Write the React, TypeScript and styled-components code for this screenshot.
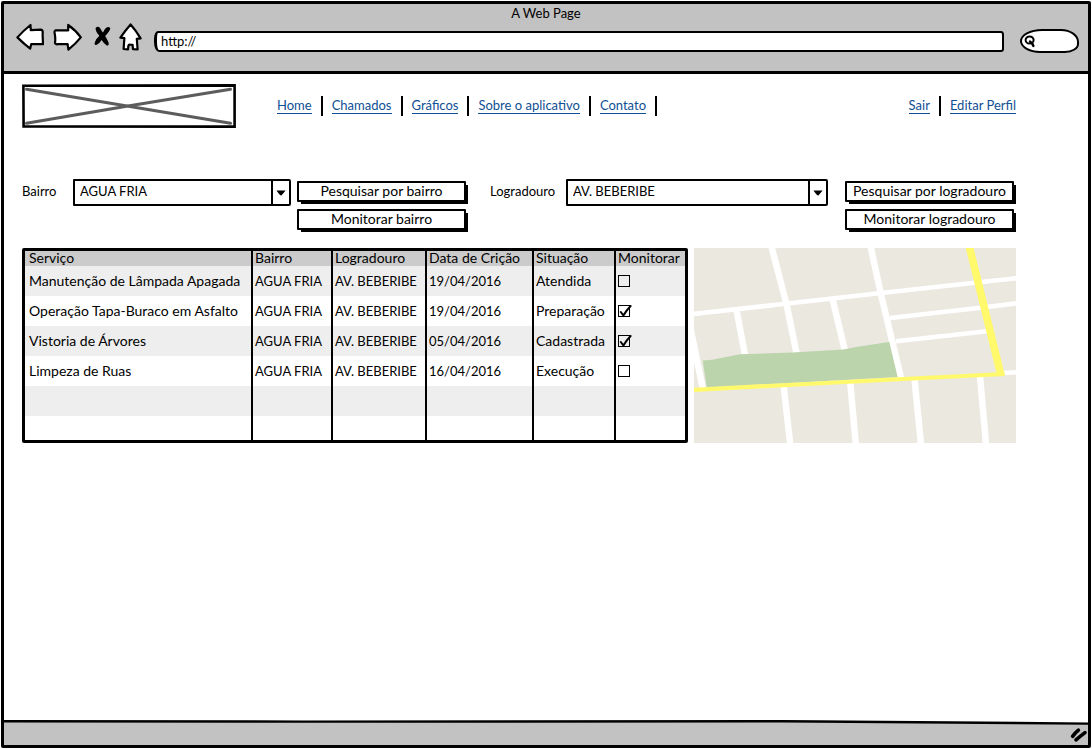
import React from "react";
import styled, { createGlobalStyle } from "styled-components";

const GlobalStyle = createGlobalStyle`
  *, *::before, *::after { box-sizing: border-box; }
  body { margin: 0; background: #fff; }
  body, button, input, select, table {
    font-family: Lato, "Open Sans", sans-serif;
    font-size: 14px;
    line-height: 18px;
    color: #000;
  }
`;

const Page = styled.div`
  display: flex;
  min-height: 100vh;
  padding: 1px;
`;

const Frame = styled.div`
  flex: 1;
  min-width: 0;
  display: flex;
  flex-direction: column;
  border: 3px solid #000;
  border-radius: 2px;
`;

const Chrome = styled.header`
  height: 70px;
  background: #c2c2c2;
  border-bottom: 3px solid #000;
`;

const PageTitle = styled.div`
  font-size: 13px;
  text-align: center;
`;

const Toolbar = styled.div`
  display: flex;
  align-items: flex-start;
  padding: 1px 9px 0 12px;
`;

const ToolButton = styled.button<{ $gap: number }>`
  display: flex;
  padding: 0;
  margin-right: ${(p) => p.$gap}px;
  border: 0;
  background: none;
`;

const Address = styled.input`
  flex: 1;
  min-width: 0;
  height: 21px;
  margin: 8px 16px 0 0;
  padding: 0 4px 2px;
  font-size: 13px;
  border: 2px solid #000;
  border-left-width: 3px;
  border-radius: 4px 3px 3px 5px / 8px 4px 3px 10px;
  background: #fff;
  outline: 0;
`;

const SearchBox = styled.div`
  display: flex;
  align-items: center;
  width: 59px;
  height: 24px;
  margin-top: 6px;
  padding-left: 2px;
  border: 2px solid #000;
  border-radius: 22px 18px 14px 20px / 12px 13px 9px 12px;
  background: #fff;
`;

const SearchInput = styled.input`
  width: 36px;
  height: 16px;
  padding: 0;
  border: 0;
  background: none;
  outline: 0;
`;

const Content = styled.main`
  flex: 1;
  padding: 10px 72px 20px 18px;
`;

const TopRow = styled.div`
  display: flex;
  align-items: center;
  height: 44px;
  margin-bottom: 51px;
`;

const Logo = styled.svg`
  display: block;
  width: 214px;
  height: 44px;
  margin-right: 41px;
`;

const Nav = styled.nav<{ $end?: boolean }>`
  display: flex;
  align-items: center;
  gap: 9px;
  margin-left: ${(p) => (p.$end ? "auto" : "0")};
`;

const NavLink = styled.a`
  font-size: 13px;
  line-height: 15px;
  color: #0f4f94;
  text-decoration: none;
  border-bottom: 1px solid #0f4f94;
  white-space: nowrap;
`;

const Separator = styled.span`
  width: 2px;
  height: 20px;
  background: #000;
`;

const Filters = styled.div`
  display: flex;
  align-items: flex-start;
  margin-bottom: 15px;
`;

const FilterLabel = styled.label<{ $width: number }>`
  width: ${(p) => p.$width}px;
  padding-top: 3px;
  font-size: 13px;
`;

const SelectBox = styled.div<{ $basis: number }>`
  flex: ${(p) => p.$basis} 1 ${(p) => p.$basis}px;
  min-width: 0;
  display: flex;
  height: 27px;
  border: 2px solid #000;
  border-radius: 1px 2px 2px 1px;
  background: #fff;
`;

const Select = styled.select`
  flex: 1;
  min-width: 0;
  margin-right: -18px;
  padding: 0 22px 4px 5px;
  font-size: 13px;
  appearance: none;
  border: 0;
  background: none;
  outline: 0;
`;

const SelectArrow = styled.span`
  display: flex;
  align-items: center;
  justify-content: center;
  width: 18px;
  border-left: 2px solid #000;
  pointer-events: none;
`;

const ButtonStack = styled.div<{ $before: number; $after: number }>`
  display: flex;
  flex-direction: column;
  gap: 7px;
  width: 169px;
  margin: 2px ${(p) => p.$after}px 3px ${(p) => p.$before}px;
`;

const Button = styled.button`
  height: 21px;
  padding: 0 0 2px;
  line-height: 15px;
  border: 2px solid #000;
  border-radius: 1px;
  background: #fff;
  box-shadow: 3px 3px 0 -1px #000;
`;

const Results = styled.div`
  display: flex;
  align-items: flex-start;
  gap: 6px;
`;

const TableBox = styled.div`
  flex: 666 1 666px;
  min-width: 0;
  border: 3px solid #000;
  border-radius: 2px;
`;

const Table = styled.table`
  width: 100%;
  table-layout: fixed;
  border-collapse: separate;
  border-spacing: 0;
  white-space: nowrap;
`;

const HeadCell = styled.th<{ $width?: number }>`
  width: ${(p) => (p.$width ? `${p.$width}px` : "auto")};
  height: 15px;
  padding: 0 0 2px 2px;
  font-weight: 400;
  line-height: 13px;
  text-align: left;
  background: #cbcbcb;
  border-left: 2px solid #000;
  &:first-child { border-left: 0; padding-left: 4px; }
`;

const Row = styled.tr<{ $last?: boolean }>`
  height: ${(p) => (p.$last ? 24 : 30)}px;
  &:nth-child(odd) { background: #eee; }
`;

const Cell = styled.td<{ $small?: boolean }>`
  padding: 0 0 0 2px;
  font-size: ${(p) => (p.$small ? 13 : 14)}px;
  border-left: 2px solid #000;
  &:first-child { border-left: 0; padding-left: 4px; }
`;

const CheckBox = styled.span`
  display: grid;
  width: 14px;
  height: 14px;
  > * { grid-area: 1 / 1; }
`;

const CheckInput = styled.input`
  width: 12px;
  height: 12px;
  margin: 1px 0 0;
  appearance: none;
  border: 1px solid #000;
  & + svg { visibility: hidden; pointer-events: none; }
  &:checked + svg { visibility: visible; }
`;

const MapImage = styled.svg`
  flex: 322 1 322px;
  min-width: 0;
  display: block;
`;

const StatusLine = styled.svg`
  display: block;
  width: 100%;
  height: 5px;
`;

const StatusBar = styled.footer`
  display: flex;
  justify-content: flex-end;
  align-items: center;
  height: 20px;
  background: #c2c2c2;
`;

const columns: { title: string; width?: number }[] = [
  { title: "Serviço" },
  { title: "Bairro", width: 80 },
  { title: "Logradouro", width: 94 },
  { title: "Data de Crição", width: 107 },
  { title: "Situação", width: 82 },
  { title: "Monitorar", width: 71 },
];

const calls = [
  { service: "Manutenção de Lâmpada Apagada", date: "19/04/2016", status: "Atendida", watched: false },
  { service: "Operação Tapa-Buraco em Asfalto", date: "19/04/2016", status: "Preparação", watched: true },
  { service: "Vistoria de Árvores", date: "05/04/2016", status: "Cadastrada", watched: true },
  { service: "Limpeza de Ruas", date: "16/04/2016", status: "Execução", watched: false },
];

const menu = ["Home", "Chamados", "Gráficos", "Sobre o aplicativo", "Contato"];

const outline = {
  fill: "#fff",
  stroke: "#000",
  strokeWidth: 2.2,
  strokeLinejoin: "round" as const,
  strokeLinecap: "round" as const,
};

function Arrow() {
  return (
    <SelectArrow>
      <svg width="10" height="6" viewBox="0 0 10 6" aria-hidden="true">
        <path d="M0.5 0.6 L9.6 0.4 Q7.5 3 5.6 5.2 Q4.8 5.8 4 5 Q2 3 0.5 0.6Z" />
      </svg>
    </SelectArrow>
  );
}

function StreetMap() {
  return (
    <MapImage viewBox="0 0 322 195" role="img" aria-label="Mapa">
      <rect width="322" height="195" fill="#ebe8e0" />
      <g fill="none" stroke="#fff" strokeWidth="6.5">
        <path d="M-4 78 L8.7 140" />
        <path d="M77.3 -2 L92.7 57 L102.5 105" />
        <path d="M176.5 -2 L186.7 45.3 L207 130" />
        <path d="M42.5 62 L51 107" />
        <path d="M138.5 51 L151 103" />
        <path d="M89.7 139 L96.2 196" />
        <path d="M156.3 135 L161.8 196" />
        <path d="M220.6 132 L227 196" />
        <path d="M286 128 L292 196" />
      </g>
      <g fill="none" stroke="#fff" strokeWidth="4.6">
        <path d="M-1 66 L89.3 56 L189.3 44.7 L323 30.2" />
        <path d="M196 70 L286.7 59.7 L323 55.2" />
        <path d="M202 93.3 L293 83.3" />
        <path d="M308 125 L323 124.2" />
      </g>
      <path
        d="M8.7 112.5 L18 111.8 L46 106.3 L98 104.5 L149 101.5 L165 98.4 L195.3 94 L203.6 129 L12.7 139.5Z"
        fill="#bcd4ac"
      />
      <path d="M0 141.8 L103 136.5 L209 131 L310.5 126" fill="none" stroke="#fff96b" strokeWidth="4.2" />
      <path d="M275.2 -2 L307 127.5" fill="none" stroke="#fff96b" strokeWidth="7.6" />
    </MapImage>
  );
}

export default function App() {
  return (
    <>
      <GlobalStyle />
      <Page>
        <Frame>
          <Chrome>
            <PageTitle>A Web Page</PageTitle>
            <Toolbar>
              <ToolButton $gap={9} type="button" aria-label="Voltar">
                <svg width="28" height="28" viewBox="0 0 28 28" {...outline}>
                  <path d="M1.4 14.4 Q7 8 14.5 2 L14.8 7.2 L25 6.6 Q27.2 7 26.6 11 Q26.8 16 27 21.2 L15.2 21.2 L14.2 25.6 Q8 21 1.4 14.4Z" />
                </svg>
              </ToolButton>
              <ToolButton $gap={12} type="button" aria-label="Avançar">
                <svg width="29" height="28" viewBox="0 0 29 28" {...outline}>
                  <path d="M27.8 14.4 Q23 7.5 15.2 2 L15.2 7.3 L2.4 7.4 Q1 8 1.8 11 Q2.6 16 2 20 Q2.4 21.6 4.6 21.2 L14.6 21 L15.4 26.6 Q23 20.5 27.8 14.4Z" />
                </svg>
              </ToolButton>
              <ToolButton $gap={8} type="button" aria-label="Parar">
                <svg width="17" height="28" viewBox="0 0 17 28">
                  <path d="M1.6 5 Q4 2.6 6.2 5.2 Q7.6 8 9 9.4 Q10.8 5.2 13 4.2 Q16 3.4 16.3 5.6 Q15.8 8.6 11.2 13 Q12.4 15 14.6 19.4 Q15.2 22.8 12.8 22.6 Q9.8 20.6 7.6 17 Q5.4 20.8 2.4 22 Q0 22 0.8 19.4 Q2 15.6 5.4 12.8 Q1.4 8.6 1.6 5Z" />
                </svg>
              </ToolButton>
              <ToolButton $gap={12} type="button" aria-label="Início">
                <svg width="23" height="28" viewBox="0 0 23 28" {...outline}>
                  <path d="M11.6 1.4 Q6.6 7 1.4 14.6 L5.4 15.2 Q5 20 4.6 26 L9 26.4 L9.4 22.6 Q9.6 21.4 11 21.6 L13.6 21.8 L14 26.2 L18.6 26.4 Q18.2 21 17.8 15.8 L21.6 15.4 Q17 7.4 11.6 1.4Z" />
                </svg>
              </ToolButton>
              <Address type="text" aria-label="Endereço" defaultValue="http://" />
              <SearchBox>
                <svg width="12" height="14" viewBox="0 0 12 14" fill="none" stroke="#000" strokeLinecap="round">
                  <ellipse cx="5.6" cy="6" rx="4" ry="3.6" strokeWidth="2" />
                  <path d="M6 7.6 Q8.2 9 9.4 12" strokeWidth="2.4" />
                </svg>
                <SearchInput type="text" aria-label="Buscar" />
              </SearchBox>
            </Toolbar>
          </Chrome>

          <Content>
            <TopRow>
              <Logo viewBox="0 0 214 44" role="img" aria-label="Logotipo">
                <path d="M1.4 1.7 L212.6 1.4 L212.6 42.6 L1.6 42.4Z" fill="#fff" stroke="#000" strokeWidth="2.6" />
                <path d="M4.5 5.2 L208.5 39.2 M4.5 39.2 L106 22 L208.5 5.2" fill="none" stroke="#5c5c5c" strokeWidth="3" strokeLinecap="round" />
              </Logo>
              <Nav aria-label="Principal">
                {menu.map((item) => (
                  <React.Fragment key={item}>
                    <NavLink href="#">{item}</NavLink>
                    <Separator />
                  </React.Fragment>
                ))}
              </Nav>
              <Nav $end aria-label="Conta">
                <NavLink href="#">Sair</NavLink>
                <Separator />
                <NavLink href="#">Editar Perfil</NavLink>
              </Nav>
            </TopRow>

            <Filters>
              <FilterLabel $width={51} htmlFor="bairro">Bairro</FilterLabel>
              <SelectBox $basis={218}>
                <Select id="bairro">
                  <option>AGUA FRIA</option>
                </Select>
                <Arrow />
              </SelectBox>
              <ButtonStack $before={6} $after={24}>
                <Button type="button">Pesquisar por bairro</Button>
                <Button type="button">Monitorar bairro</Button>
              </ButtonStack>
              <FilterLabel $width={76} htmlFor="logradouro">Logradouro</FilterLabel>
              <SelectBox $basis={262}>
                <Select id="logradouro">
                  <option>AV. BEBERIBE</option>
                </Select>
                <Arrow />
              </SelectBox>
              <ButtonStack $before={17} $after={2}>
                <Button type="button">Pesquisar por logradouro</Button>
                <Button type="button">Monitorar logradouro</Button>
              </ButtonStack>
            </Filters>

            <Results>
              <TableBox>
                <Table>
                  <thead>
                    <tr>
                      {columns.map((c) => (
                        <HeadCell key={c.title} $width={c.width}>{c.title}</HeadCell>
                      ))}
                    </tr>
                  </thead>
                  <tbody>
                    {calls.map((call) => (
                      <Row key={call.service}>
                        <Cell>{call.service}</Cell>
                        <Cell $small>AGUA FRIA</Cell>
                        <Cell $small>AV. BEBERIBE</Cell>
                        <Cell $small>{call.date}</Cell>
                        <Cell>{call.status}</Cell>
                        <Cell>
                          <CheckBox>
                            <CheckInput type="checkbox" defaultChecked={call.watched} aria-label={`Monitorar ${call.service}`} />
                            <svg width="14" height="14" viewBox="0 0 14 14" fill="none" stroke="#000" strokeLinecap="round" aria-hidden="true">
                              <path d="M2.8 8 L5.4 11.4 Q8.4 6.4 12.6 2" strokeWidth="2" />
                            </svg>
                          </CheckBox>
                        </Cell>
                      </Row>
                    ))}
                    <Row>{columns.map((c) => <Cell key={c.title} />)}</Row>
                    <Row $last>{columns.map((c) => <Cell key={c.title} />)}</Row>
                  </tbody>
                </Table>
              </TableBox>
              <StreetMap />
            </Results>
          </Content>

          <StatusLine viewBox="0 0 1086 5" preserveAspectRatio="none" aria-hidden="true">
            <path d="M0 1 L300 1.4 L780 0.6 L1086 3 V5 H0Z" fill="#c2c2c2" />
            <path d="M0 1.2 L300 1.6 L780 1.2 L1086 3.6" fill="none" stroke="#000" strokeWidth="2.4" />
          </StatusLine>
          <StatusBar>
            <svg width="18" height="16" viewBox="0 0 18 16" stroke="#000" strokeLinecap="round" aria-hidden="true">
              <path d="M2.6 9.4 Q5 6 8.4 3.2 M6 12.8 Q10 9.4 15 5.6" fill="none" strokeWidth="3.6" />
            </svg>
          </StatusBar>
        </Frame>
      </Page>
    </>
  );
}
